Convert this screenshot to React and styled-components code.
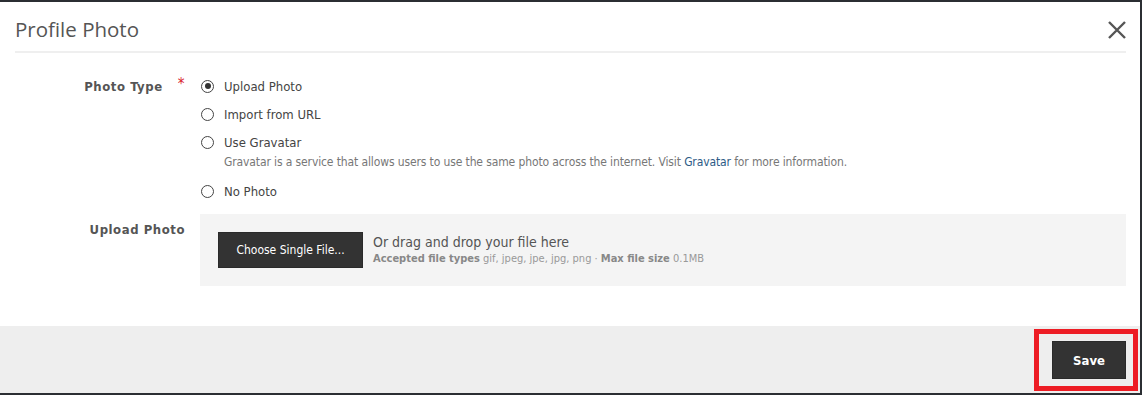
import React from 'react';
import styled, { createGlobalStyle } from 'styled-components';

const GlobalStyle = createGlobalStyle`
  html, body {
    margin: 0;
    padding: 0;
    background: #2b2e33;
  }
  body {
    font-family: Tahoma, "DejaVu Sans Condensed", "DejaVu Sans", sans-serif;
  }
`;

const Page = styled.div`
  width: 1142px;
  height: 395px;
  padding: 2px 2px 2px 0;
  box-sizing: border-box;
`;

const Modal = styled.div`
  width: 1140px;
  height: 391px;
  background: #fff;
  display: flex;
  flex-direction: column;
`;

const Header = styled.div`
  height: 49px;
  margin: 0 14px 0 15px;
  border-bottom: 2px solid #efefef;
  display: flex;
  align-items: center;
  justify-content: space-between;
`;

const Title = styled.h1`
  margin: 0;
  padding-top: 4px;
  font-family: "Open Sans", sans-serif;
  font-weight: 400;
  font-size: 20.5px;
  color: #555;
`;

const CloseButton = styled.button`
  background: none;
  border: none;
  padding: 0;
  margin-right: -1px;
  margin-top: 6px;
  width: 20px;
  height: 20px;
  display: flex;
  cursor: pointer;
`;

const Body = styled.div`
  flex: 1;
  padding: 19px 14px 0 0;
  display: flex;
  flex-direction: column;
`;

const FormRow = styled.div`
  display: grid;
  grid-template-columns: 185px 1fr;
  column-gap: 15px;
  margin-top: ${p => p.$gap || 0}px;
`;

const Label = styled.div`
  text-align: right;
  font-weight: bold;
  font-size: 13px;
  letter-spacing: 0.55px;
  color: #555;
  line-height: ${p => p.$lh || 28}px;
  padding-top: ${p => p.$top || 0}px;
`;

const Required = styled.span`
  color: #d9232d;
  font-weight: normal;
  font-size: 15px;
  margin-left: 15px;
  position: relative;
  top: -2px;
`;

const RadioList = styled.div`
  display: flex;
  flex-direction: column;
`;

const Option = styled.label`
  display: flex;
  align-items: center;
  height: 28px;
  font-size: 13px;
  color: #444;
  cursor: pointer;
`;

const Circle = styled.span`
  width: 13px;
  height: 13px;
  margin-left: 1px;
  margin-right: 10px;
  border: 1px solid #444;
  border-radius: 50%;
  box-sizing: border-box;
  display: flex;
  align-items: center;
  justify-content: center;

  &::after {
    content: '';
    width: 6px;
    height: 6px;
    border-radius: 50%;
    background: #333;
    display: ${p => (p.$checked ? 'block' : 'none')};
  }
`;

const Help = styled.div`
  margin: -1px 0 8px 24px;
  font-size: 12px;
  letter-spacing: -0.12px;
  line-height: 14px;
  color: #777;

  a {
    color: #2d5b86;
    text-decoration: none;
  }
`;

const Dropzone = styled.div`
  background: #f4f4f4;
  height: 72px;
  padding: 18px;
  box-sizing: border-box;
  display: flex;
  align-items: center;
  gap: 10px;
`;

const DarkButton = styled.button`
  background: #333;
  color: #fff;
  border: 1px solid #2a2a2a;
  border-radius: 0;
  font-family: inherit;
  font-size: ${p => p.$size || 12}px;
  font-weight: ${p => (p.$bold ? 'bold' : 'normal')};
  width: ${p => p.$w}px;
  height: ${p => p.$h}px;
  padding: 0;
  cursor: pointer;
`;

const DropText = styled.div`
  display: flex;
  flex-direction: column;
  margin-top: -2px;
`;

const DropTitle = styled.div`
  font-size: 14px;
  color: #555;
  line-height: 18px;
`;

const DropMeta = styled.div`
  font-size: 11px;
  color: #999;
  line-height: 14px;
  margin-top: 1px;

  b {
    color: #888;
  }
`;

const Footer = styled.div`
  height: 67px;
  background: #eee;
  display: flex;
  justify-content: flex-end;
  align-items: flex-start;
  padding: 3px 2px 0 0;
  box-sizing: border-box;
`;

const Highlight = styled.div`
  border: 5px solid #ed1c24;
  padding: 7px 7px 7px 13px;
  display: flex;
`;

const options = [
  { label: 'Upload Photo', checked: true },
  { label: 'Import from URL' },
  { label: 'Use Gravatar', help: true },
  { label: 'No Photo' },
];

const App = () => (
  <Page>
    <GlobalStyle />
    <Modal>
      <Header>
        <Title>Profile Photo</Title>
        <CloseButton aria-label="Close">
          <svg width="20" height="20" viewBox="0 0 20 20">
            <path d="M2 2 L18 18 M18 2 L2 18" stroke="#555" strokeWidth="2.4" fill="none" />
          </svg>
        </CloseButton>
      </Header>
      <Body>
        <FormRow>
          <Label>
            Photo Type<Required>*</Required>
          </Label>
          <RadioList>
            {options.map(o => (
              <React.Fragment key={o.label}>
                <Option>
                  <Circle $checked={o.checked} />
                  {o.label}
                </Option>
                {o.help && (
                  <Help>
                    Gravatar is a service that allows users to use the same photo across the internet. Visit{' '}
                    <a href="#gravatar">Gravatar</a> for more information.
                  </Help>
                )}
              </React.Fragment>
            ))}
          </RadioList>
        </FormRow>
        <FormRow $gap={9}>
          <Label $lh={16} $top={8}>Upload Photo</Label>
          <Dropzone>
            <DarkButton $w={145} $h={36}>Choose Single File...</DarkButton>
            <DropText>
              <DropTitle>Or drag and drop your file here</DropTitle>
              <DropMeta>
                <b>Accepted file types</b> gif, jpeg, jpe, jpg, png · <b>Max file size</b> 0.1MB
              </DropMeta>
            </DropText>
          </Dropzone>
        </FormRow>
      </Body>
      <Footer>
        <Highlight>
          <DarkButton $w={74} $h={38} $size={13} $bold>Save</DarkButton>
        </Highlight>
      </Footer>
    </Modal>
  </Page>
);

export default App;
